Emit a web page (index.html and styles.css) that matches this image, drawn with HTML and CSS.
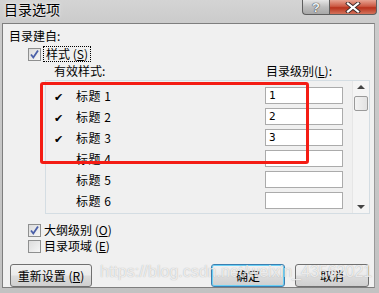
FILE: index.html
```html
<!DOCTYPE html>
<html lang="zh-CN">
<head>
<meta charset="UTF-8">
<title>目录选项</title>
<link rel="stylesheet" href="styles.css">
</head>
<body>
<div class="window">
  <div class="titlebar">
    <span class="title">目录选项</span>
    <div class="caption">
      <div class="cap help">?</div>
      <div class="cap close">
        <svg width="16" height="11" viewBox="0 0 16 11"><path d="M3 1.5 L13 9.5 M13 1.5 L3 9.5" stroke="#3a2a2a" stroke-width="4" stroke-linecap="square"/><path d="M3 1.5 L13 9.5 M13 1.5 L3 9.5" stroke="#fff" stroke-width="2.2" stroke-linecap="square"/></svg>
      </div>
    </div>
  </div>

  <div class="client">
    <div class="label">目录建自:</div>
    <div class="check-row first">
      <span class="box"><svg width="11" height="11" viewBox="0 0 11 11"><path d="M2 5.5 L4.3 8.5 L9 1.5" fill="none" stroke="#4a5fa8" stroke-width="1.8"/></svg></span>
      <span class="focus">样式 (<u>S</u>)</span>
    </div>
    <div class="list-head">
      <span class="head-style">有效样式:</span>
      <span class="head-level">目录级别(<u>L</u>):</span>
    </div>

    <div class="list">
      <div class="rows">
        <div class="row"><span class="tick">✔</span><span class="name">标题 1</span><span class="level">1</span></div>
        <div class="row"><span class="tick">✔</span><span class="name">标题 2</span><span class="level">2</span></div>
        <div class="row"><span class="tick">✔</span><span class="name">标题 3</span><span class="level">3</span></div>
        <div class="row"><span class="tick"></span><span class="name">标题 4</span><span class="level"></span></div>
        <div class="row"><span class="tick"></span><span class="name">标题 5</span><span class="level"></span></div>
        <div class="row"><span class="tick"></span><span class="name">标题 6</span><span class="level"></span></div>
      </div>
      <div class="scrollbar">
        <div class="arrow up"></div>
        <div class="thumb"></div>
        <div class="track"></div>
        <div class="arrow down"></div>
      </div>
    </div>

    <div class="check-row outline">
      <span class="box"><svg width="11" height="11" viewBox="0 0 11 11"><path d="M2 5.5 L4.3 8.5 L9 1.5" fill="none" stroke="#4a5fa8" stroke-width="1.8"/></svg></span>
      <span>大纲级别 (<u>O</u>)</span>
    </div>
    <div class="check-row">
      <span class="box"></span>
      <span>目录项域 (<u>E</u>)</span>
    </div>

    <div class="buttons">
      <button class="btn reset">重新设置 (<u>R</u>)</button>
      <div class="right">
        <button class="btn default">确定</button>
        <button class="btn">取消</button>
      </div>
    </div>

    <div class="annot"></div>
    <div class="watermark">https://blog.csdn.net/weixin_43562021</div>
  </div>
</div>
</body>
</html>
```

FILE: styles.css
```css
body {
  margin: 0;
  padding: 0;
  font-family: "Noto Sans CJK SC", "Liberation Sans", sans-serif;
  font-size: 12px;
  color: #000;
}

.window {
  width: 379px;
  height: 293px;
  box-sizing: border-box;
  padding: 0 4px 5px 2px;
  background: linear-gradient(to bottom, #d4d4d4 0px, #cbcbcb 23px, #c2c2c2 100%);
}

.titlebar {
  height: 23px;
  display: flex;
  justify-content: space-between;
  align-items: flex-start;
}

.title {
  font-size: 14px;
  line-height: 18px;
  margin: 0 0 0 2px;
  text-shadow: 0 0 4px #eee, 0 0 2px #fff;
}

.caption {
  display: flex;
  margin-right: -2px;
}

.cap {
  height: 15px;
  box-sizing: border-box;
  border: 1px solid #5e5e5e;
  border-top: none;
  display: flex;
  align-items: center;
  justify-content: center;
}

.help {
  width: 27px;
  border-radius: 0 0 0 4px;
  border-right: none;
  background: linear-gradient(to bottom, #e6e6e6, #bdbdbd 50%, #a8a8a8);
  color: #eef2f7;
  font-family: "Liberation Sans", sans-serif;
  font-weight: bold;
  font-size: 13px;
  text-shadow: 0 0 1px #333, 0 0 1px #333;
}

.close {
  width: 48px;
  border-radius: 0 0 4px 0;
  background: linear-gradient(to bottom, #e7a493, #cc5a44 45%, #b8321c 55%, #d3735c);
}

.client {
  position: relative;
  overflow: hidden;
  height: 265px;
  box-sizing: border-box;
  border: 1px solid #7e7e7e;
  border-right-color: #9a9a9a;
  background: #f0f0f0;
  padding: 5px 5px 0 0;
}

.label {
  height: 14px;
  line-height: 14px;
  padding-left: 6px;
}

.check-row {
  display: flex;
  align-items: center;
  height: 16px;
  line-height: 14px;
  padding-left: 25px;
}

.check-row.first {
  margin-top: 3px;
}

.check-row.outline {
  margin-top: 8px;
}

.box {
  width: 13px;
  height: 13px;
  box-sizing: border-box;
  border: 1px solid #8e8f8f;
  background: linear-gradient(135deg, #dcdcdc, #f6f6f6);
  display: flex;
  align-items: center;
  justify-content: center;
  margin-right: 3px;
}

.focus {
  outline: 1px dotted #000;
  padding: 0 2px;
  line-height: 14px;
}

.list-head {
  display: flex;
  height: 14px;
  line-height: 14px;
  margin-top: 2px;
}

.head-style {
  margin-left: 51px;
  width: 212px;
}

.list {
  margin: 2px 0 0 42px;
  width: 325px;
  height: 134px;
  box-sizing: border-box;
  border: 1px solid #d4dde3;
  display: flex;
}

.rows {
  flex: 1;
  padding-top: 4px;
}

.row {
  display: flex;
  align-items: center;
  height: 21px;
}

.tick {
  width: 22px;
  margin-left: 8px;
  font-size: 11px;
  line-height: 12px;
}

.name {
  width: 189px;
  letter-spacing: 0.5px;
}

.level {
  width: 78px;
  height: 17px;
  box-sizing: border-box;
  border: 1px solid #ababab;
  background: #fff;
  line-height: 15px;
  padding-left: 3px;
  font-family: "DejaVu Sans Mono", monospace;
  font-size: 11px;
}

.scrollbar {
  width: 16px;
  margin-left: 8px;
  border-left: 1px solid #e6e6e6;
  background: #f4f4f4;
  display: flex;
  flex-direction: column;
  align-items: center;
}

.arrow {
  width: 0;
  height: 0;
  border-left: 4px solid transparent;
  border-right: 4px solid transparent;
  margin: 4px 0;
}

.arrow.up {
  border-bottom: 4px solid #444;
}

.arrow.down {
  border-top: 4px solid #444;
  margin-bottom: 4px;
}

.thumb {
  width: 14px;
  height: 15px;
  box-sizing: border-box;
  margin-top: 3px;
  border: 1px solid #9a9a9a;
  border-radius: 2px;
  background: linear-gradient(to right, #f3f3f3, #e2e2e2);
}

.track {
  flex: 1;
}

.buttons {
  display: flex;
  justify-content: space-between;
  margin-top: 10px;
  padding-left: 7px;
}

.right {
  display: flex;
  gap: 10px;
}

.btn {
  height: 23px;
  width: 74px;
  box-sizing: border-box;
  border: 1px solid #707070;
  border-radius: 3px;
  background: linear-gradient(to bottom, #f2f2f2 0%, #ebebeb 48%, #dddddd 52%, #cfcfcf 100%);
  font-family: "Noto Sans CJK SC", sans-serif;
  font-size: 12px;
  padding: 0;
  color: #000;
}

.btn.reset {
  width: 82px;
}

.btn.default {
  border-color: #3c7fb1;
  box-shadow: inset 0 0 0 1px #6ad0f5;
}

.annot {
  position: absolute;
  left: 37px;
  top: 58px;
  width: 269px;
  height: 82px;
  box-sizing: border-box;
  border: 3px solid #f41c14;
  border-radius: 3px;
}

.watermark {
  position: absolute;
  left: 97px;
  top: 239px;
  font-family: "Liberation Sans", sans-serif;
  font-size: 16px;
  color: rgba(255, 255, 255, 0.75);
  text-shadow: 0 0 1px rgba(120, 120, 120, 0.6);
  white-space: nowrap;
}
```
